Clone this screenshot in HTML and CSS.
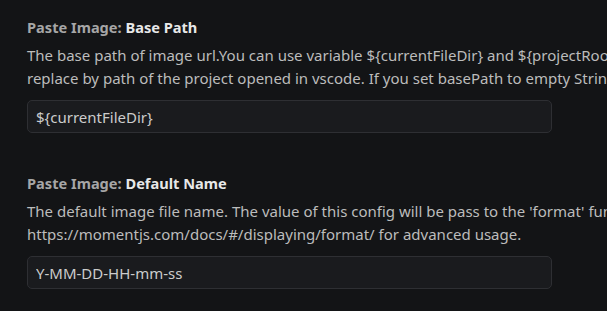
FILE: index.html
```html
<!DOCTYPE html>
<html lang="en">
<head>
  <meta charset="UTF-8" />
  <title>Settings - Paste Image</title>
  <link rel="stylesheet" href="styles.css">
</head>
<body>
  <div class="settings-list">
    <div class="setting">
      <div class="setting-title">
        <span class="category">Paste Image: </span><span class="key">Base Path</span>
      </div>
      <div class="setting-description">
        <div class="line">The base path of image url.You can use variable ${currentFileDir} and ${projectRoot}. ${currentFileDir} will be</div>
        <div class="line">replace by path of the project opened in vscode. If you set basePath to empty String, the image path will be relative.</div>
      </div>
      <input class="setting-input" type="text" value="${currentFileDir}" />
    </div>

    <div class="setting">
      <div class="setting-title">
        <span class="category">Paste Image: </span><span class="key">Default Name</span>
      </div>
      <div class="setting-description">
        <div class="line">The default image file name. The value of this config will be pass to the 'format' function of moment library.</div>
        <div class="line">https://momentjs.com/docs/#/displaying/format/ for advanced usage.</div>
      </div>
      <input class="setting-input" type="text" value="Y-MM-DD-HH-mm-ss" />
    </div>
  </div>
</body>
</html>
```

FILE: styles.css
```css
/* VS Code style settings editor, dark */
html, body {
  margin: 0;
  height: 100%;
  overflow: hidden;
}

body {
  background-color: #131416;
  font-family: "Noto Sans", "Open Sans", sans-serif;
  color: #bcbcbc;
}

.settings-list {
  padding-left: 27px;
}

.setting {
  padding: 16px 0 23px;
}

.setting-title {
  font-size: 14.6px;
  font-weight: bold;
  line-height: 22px;
  white-space: nowrap;
}

.setting-title .category {
  color: #a6a6a6;
}

.setting-title .key {
  color: #e8e8e8;
}

.setting-description {
  margin-top: 6px;
  font-size: 15px;
  line-height: 23px;
  white-space: nowrap;
}

.setting-input {
  display: block;
  box-sizing: border-box;
  width: 525px;
  height: 33px;
  margin-top: 10px;
  padding: 0 8px;
  background-color: #1a1b1e;
  border: 1px solid #2e2f33;
  border-radius: 5px;
  color: #cccccc;
  font-family: "Noto Sans", "Open Sans", sans-serif;
  font-size: 15px;
  outline: none;
}
```
